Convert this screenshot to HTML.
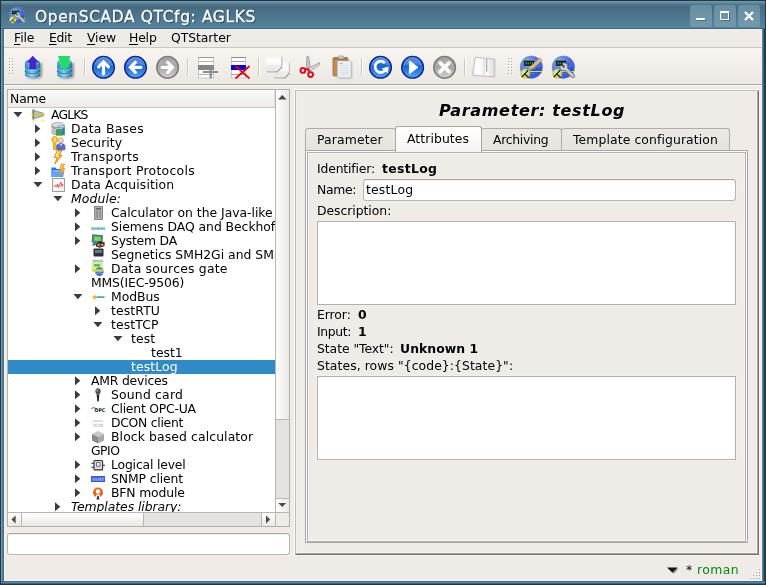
<!DOCTYPE html>
<html><head><meta charset="utf-8"><title>OpenSCADA QTCfg: AGLKS</title>
<style>
*{box-sizing:border-box;margin:0;padding:0}
html,body{width:766px;height:585px;overflow:hidden;background:#efebe7}
body{position:relative;font-family:"DejaVu Sans","Liberation Sans",sans-serif;font-size:12.4px;color:#000;line-height:14px}
.a{position:absolute}
.t u{text-decoration:underline;text-underline-offset:2px;text-decoration-thickness:1px}
.t{will-change:transform;position:absolute;white-space:nowrap;height:14px;line-height:14px;}
.b{font-weight:bold}
.i{font-style:italic}
svg{position:absolute;overflow:visible}
.sep{position:absolute;top:58px;width:2px;height:18px;border-left:1px solid #cdc9c4;border-right:1px solid #fff}
.tab{position:absolute;border:1px solid #b0ada9;border-bottom:1px solid #a9a6a3;border-radius:3px 3px 0 0;background:linear-gradient(#ece9e5,#e7e4e0)}
.ta{position:absolute;background:#fff;border:1px solid #b3b0ac;box-shadow:0 0 0 1px #f3f0ec}
.inp{position:absolute;background:#fff;border:1px solid #b7b4b0;border-top-color:#a9a6a2;border-radius:3px;box-shadow:0 0 0 1px #f3f0ec,inset 0 1px 0 #f0f0f0}
</style></head><body>

<div class="a" style="left:0;top:0;width:766px;height:585px;background:#213744"></div>
<div class="a" style="left:1px;top:1px;width:764px;height:583px;background:linear-gradient(90deg,#7399b0 0,#7399b0 1px,#557f98 1px,#557f98 2px,#40708a 2px,#40708a 761px,#5585a0 761px,#5585a0 762px,#3f637a 762px,#3f637a 763px,#263c4a 763px)"></div>
<div class="a" style="left:1px;top:581px;width:764px;height:3px;background:linear-gradient(#40708a 0,#40708a 1px,#5585a0 1px,#5585a0 2px,#3f637a 2px)"></div>
<div class="a" id="title" style="left:1px;top:1px;width:764px;height:28px;background:linear-gradient(#6d96ab 0px,#668ea3 1.5px,#4f758b 3.5px,#476b80 6px,#54849f 27px,#3f6a85 27px,#3f6a85 28px)"></div>
<svg style="left:9px;top:6.6px" width="16.4" height="16.4" viewBox="0 0 23 23"><use href="#qtcb"/><use href="#wr"/></svg>
<div id="title" class="t" style="left:35px;top:7px;letter-spacing:0.589px;height:20px;line-height:20px;font-size:15.5px;color:#fff;-webkit-text-stroke:0.3px #fff;text-shadow:1px 1px 1px #27414f">OpenSCADA QTCfg: AGLKS</div>
<div class="a" style="left:690px;top:5px;width:22px;height:22px;border-radius:3px;background:linear-gradient(#698ea2,#7399ad)"></div>
<div class="a" style="left:714px;top:5px;width:22px;height:22px;border-radius:3px;background:linear-gradient(#698ea2,#7399ad)"></div>
<div class="a" style="left:738px;top:5px;width:22px;height:22px;border-radius:3px;background:linear-gradient(#698ea2,#7399ad)"></div>
<div class="a" style="left:696px;top:18px;width:9px;height:2px;background:#fff;box-shadow:1px 1px 0 #4a6c80"></div>
<div class="a" style="left:720px;top:11px;width:9px;height:9px;border:1px solid #fff;border-top-width:2px;box-shadow:1px 1px 0 #4a6c80"></div>
<svg style="left:744px;top:11px" width="10" height="10" viewBox="0 0 10 10"><path d="M1 1 L9 9 M9 1 L1 9" stroke="#fff" stroke-width="2.2" fill="none"/></svg>
<div class="a" style="left:4px;top:29px;width:758px;height:552px;background:#efebe7;border:1px solid #f7f3ee;border-top:none"></div>
<div class="a" style="left:5px;top:29px;width:756px;height:18px;background:#efece7"></div>
<div id="menu0" class="t" style="left:13.6px;top:31px;letter-spacing:-0.085px;"><u>F</u>ile</div>
<div id="menu1" class="t" style="left:48.9px;top:31px;letter-spacing:-0.29px;"><u>E</u>dit</div>
<div id="menu2" class="t" style="left:86.9px;top:31px;letter-spacing:-0.109px;"><u>V</u>iew</div>
<div id="menu3" class="t" style="left:128.8px;top:31px;letter-spacing:-0.17px;"><u>H</u>elp</div>
<div id="menu4" class="t" style="left:170.8px;top:31px;letter-spacing:-0.063px;">QTStarter</div>
<div class="a" style="left:4px;top:47px;width:758px;height:1px;background:#c9c6c2"></div>
<div class="a" style="left:4px;top:48px;width:758px;height:36px;background:linear-gradient(#f8f5f1,#ebe8e4)"></div>
<div class="a" style="left:4px;top:84px;width:758px;height:1px;background:#aaa7a3"></div>
<div class="a" style="left:4px;top:85px;width:758px;height:1px;background:#fbfaf9"></div>
<div class="a" style="left:10px;top:59px;width:1px;height:1px;background:#fdfcfb"></div><div class="a" style="left:9px;top:58px;width:1px;height:1px;background:#a8a5a1"></div><div class="a" style="left:13px;top:59px;width:1px;height:1px;background:#fdfcfb"></div><div class="a" style="left:12px;top:58px;width:1px;height:1px;background:#a8a5a1"></div><div class="a" style="left:10px;top:62px;width:1px;height:1px;background:#fdfcfb"></div><div class="a" style="left:9px;top:61px;width:1px;height:1px;background:#a8a5a1"></div><div class="a" style="left:13px;top:62px;width:1px;height:1px;background:#fdfcfb"></div><div class="a" style="left:12px;top:61px;width:1px;height:1px;background:#a8a5a1"></div><div class="a" style="left:10px;top:65px;width:1px;height:1px;background:#fdfcfb"></div><div class="a" style="left:9px;top:64px;width:1px;height:1px;background:#a8a5a1"></div><div class="a" style="left:13px;top:65px;width:1px;height:1px;background:#fdfcfb"></div><div class="a" style="left:12px;top:64px;width:1px;height:1px;background:#a8a5a1"></div><div class="a" style="left:10px;top:68px;width:1px;height:1px;background:#fdfcfb"></div><div class="a" style="left:9px;top:67px;width:1px;height:1px;background:#a8a5a1"></div><div class="a" style="left:13px;top:68px;width:1px;height:1px;background:#fdfcfb"></div><div class="a" style="left:12px;top:67px;width:1px;height:1px;background:#a8a5a1"></div><div class="a" style="left:10px;top:71px;width:1px;height:1px;background:#fdfcfb"></div><div class="a" style="left:9px;top:70px;width:1px;height:1px;background:#a8a5a1"></div><div class="a" style="left:13px;top:71px;width:1px;height:1px;background:#fdfcfb"></div><div class="a" style="left:12px;top:70px;width:1px;height:1px;background:#a8a5a1"></div><div class="a" style="left:10px;top:74px;width:1px;height:1px;background:#fdfcfb"></div><div class="a" style="left:9px;top:73px;width:1px;height:1px;background:#a8a5a1"></div><div class="a" style="left:13px;top:74px;width:1px;height:1px;background:#fdfcfb"></div><div class="a" style="left:12px;top:73px;width:1px;height:1px;background:#a8a5a1"></div>
<div class="a" style="left:509px;top:59px;width:1px;height:1px;background:#fdfcfb"></div><div class="a" style="left:508px;top:58px;width:1px;height:1px;background:#a8a5a1"></div><div class="a" style="left:512px;top:59px;width:1px;height:1px;background:#fdfcfb"></div><div class="a" style="left:511px;top:58px;width:1px;height:1px;background:#a8a5a1"></div><div class="a" style="left:509px;top:62px;width:1px;height:1px;background:#fdfcfb"></div><div class="a" style="left:508px;top:61px;width:1px;height:1px;background:#a8a5a1"></div><div class="a" style="left:512px;top:62px;width:1px;height:1px;background:#fdfcfb"></div><div class="a" style="left:511px;top:61px;width:1px;height:1px;background:#a8a5a1"></div><div class="a" style="left:509px;top:65px;width:1px;height:1px;background:#fdfcfb"></div><div class="a" style="left:508px;top:64px;width:1px;height:1px;background:#a8a5a1"></div><div class="a" style="left:512px;top:65px;width:1px;height:1px;background:#fdfcfb"></div><div class="a" style="left:511px;top:64px;width:1px;height:1px;background:#a8a5a1"></div><div class="a" style="left:509px;top:68px;width:1px;height:1px;background:#fdfcfb"></div><div class="a" style="left:508px;top:67px;width:1px;height:1px;background:#a8a5a1"></div><div class="a" style="left:512px;top:68px;width:1px;height:1px;background:#fdfcfb"></div><div class="a" style="left:511px;top:67px;width:1px;height:1px;background:#a8a5a1"></div><div class="a" style="left:509px;top:71px;width:1px;height:1px;background:#fdfcfb"></div><div class="a" style="left:508px;top:70px;width:1px;height:1px;background:#a8a5a1"></div><div class="a" style="left:512px;top:71px;width:1px;height:1px;background:#fdfcfb"></div><div class="a" style="left:511px;top:70px;width:1px;height:1px;background:#a8a5a1"></div><div class="a" style="left:509px;top:74px;width:1px;height:1px;background:#fdfcfb"></div><div class="a" style="left:508px;top:73px;width:1px;height:1px;background:#a8a5a1"></div><div class="a" style="left:512px;top:74px;width:1px;height:1px;background:#fdfcfb"></div><div class="a" style="left:511px;top:73px;width:1px;height:1px;background:#a8a5a1"></div>
<div class="sep" style="left:84px"></div>
<div class="sep" style="left:187px"></div>
<div class="sep" style="left:258px"></div>
<div class="sep" style="left:361px"></div>
<div class="sep" style="left:464px"></div>
<svg style="left:0;top:0" width="766" height="90" viewBox="0 0 766 90">
<defs>
<linearGradient id="cyl" x1="0" x2="1" y1="0" y2="0"><stop offset="0" stop-color="#2a86c0"/><stop offset=".45" stop-color="#7fd0f2"/><stop offset="1" stop-color="#1f6fa6"/></linearGradient>
<linearGradient id="bl" x1="0" x2="0" y1="0" y2="1"><stop offset="0" stop-color="#2268d2"/><stop offset=".5" stop-color="#1c66d0"/><stop offset="1" stop-color="#55aaf4"/></linearGradient>
<linearGradient id="gr" x1="0" x2="0" y1="0" y2="1"><stop offset="0" stop-color="#8a8a8a"/><stop offset=".5" stop-color="#a8a8a8"/><stop offset="1" stop-color="#d0d0d0"/></linearGradient>
<linearGradient id="pg" x1="0" x2="0" y1="0" y2="1"><stop offset="0" stop-color="#f4f4f4"/><stop offset=".25" stop-color="#ffffff"/><stop offset=".55" stop-color="#f6f6f6"/><stop offset=".6" stop-color="#ececec"/><stop offset="1" stop-color="#e6e6e6"/></linearGradient>
<filter id="sh" x="-20%" y="-20%" width="150%" height="150%"><feGaussianBlur stdDeviation="0.8"/></filter>
<radialGradient id="qb" cx=".32" cy=".28" r=".8"><stop offset="0" stop-color="#8eaef0"/><stop offset=".55" stop-color="#4a70e2"/><stop offset="1" stop-color="#2f52d2"/></radialGradient>
<g id="qtcb">
<circle cx="11.5" cy="11.6" r="11.2" fill="url(#qb)" stroke="#6c84b4" stroke-width=".7"/>
<rect x="4" y="5.2" width="10.2" height="4.9" rx=".5" fill="#0a0a0a"/>
<path d="M5.3 6.3 h1.6 v2.6 h-1.6z M7.5 6.3 h1.6 v2.6 h-1.6z M10.2 6.3 h1.2 v2.6 h-1.2z M12 6.3 h1 v2.6 h-1z" fill="#19a51f"/>
<path d="M14.2 7.8 H16.6 V10.4" stroke="#3a4a78" stroke-width=".7" fill="none"/>
<path d="M12.5 16.6 L14 13.4 L15.2 17 L16.6 12 L18 17 L19.6 12.2 L20.8 16.4" stroke="#2840a8" stroke-width=".9" fill="none"/>
<path d="M8.6 15.9 H22.6" stroke="#e4ea38" stroke-width=".9"/>
<circle cx="5.4" cy="18" r="4.7" fill="#cdd874" stroke="#a8b058" stroke-width=".5"/>
<circle cx="4.7" cy="17.2" r="2.8" fill="#e0e898" opacity=".8"/>
<path d="M1.9 21.6 L8.3 14.6 M5 18.2 L8.8 22.2" stroke="#141414" stroke-width="1.2" fill="none"/>
</g>
<g id="wr">
<path d="M13.6 12.8 L21 20.4" stroke="#6e6e6e" stroke-width="4.4" stroke-linecap="round"/>
<path d="M12.0 8.5 A2.5 2.5 0 1 1 9.3 11.2" stroke="#767676" stroke-width="3" fill="none" stroke-linecap="round"/>
<path d="M13.6 12.8 L21 20.4" stroke="#c6c6c6" stroke-width="2.8" stroke-linecap="round"/>
<path d="M12.0 8.5 A2.5 2.5 0 1 1 9.3 11.2" stroke="#d8d8d8" stroke-width="1.8" fill="none" stroke-linecap="round"/>
</g>
<g id="bc"><circle r="10.8" fill="url(#bl)" stroke="#0b2490" stroke-width="1.5"/><circle r="9.6" fill="none" stroke="#5a8ee8" stroke-width=".7" opacity=".7"/><path d="M-9 -1.5 A9 9 0 0 1 9 -1.5 Q0 -5.5 -9 -1.5Z" fill="#fff" opacity=".22"/></g>
<g id="gc"><circle r="10.8" fill="url(#gr)" stroke="#7c7c7c" stroke-width="1.5"/><path d="M-9 -1.5 A9 9 0 0 1 9 -1.5 Q0 -5.5 -9 -1.5Z" fill="#fff" opacity=".18"/></g>
<linearGradient id="bk" x1="0" x2="1" y1="0" y2="0"><stop offset="0" stop-color="#f1efec"/><stop offset=".2" stop-color="#fefefd"/><stop offset=".5" stop-color="#f6f4f2"/><stop offset=".62" stop-color="#fbfaf9"/><stop offset="1" stop-color="#dddad7"/></linearGradient>
<filter id="sh2" x="-20%" y="-20%" width="150%" height="150%"><feGaussianBlur stdDeviation="0.5"/></filter>
</defs>
<!-- 1 db load (up arrow) -->
<g>
<path d="M27 63 V76 A7 2.6 0 0 0 42 76 V63Z" fill="#222" opacity=".45" filter="url(#sh)"/>
<path d="M25 62 V75 A7.5 2.8 0 0 0 40 75 V62Z" fill="url(#cyl)"/>
<ellipse cx="32.5" cy="62" rx="7.5" ry="2.8" fill="#5fb4e0"/>
<path d="M25 66.5 A7.5 2.8 0 0 0 40 66.5 M25 71 A7.5 2.8 0 0 0 40 71" stroke="#1b6a9e" stroke-width=".9" fill="none" opacity=".9"/><path d="M25 67.5 A7.5 2.8 0 0 0 40 67.5 M25 72 A7.5 2.8 0 0 0 40 72" stroke="#a8e0f8" stroke-width=".8" fill="none" opacity=".7"/>
<path d="M32.8 55.8 L39 62.5 L36 62.5 L36.4 69 L29.2 69 L29.6 62.5 L26.6 62.5Z" fill="#4a22d0"/>
</g>
<!-- 2 db save (down arrow) -->
<g>
<path d="M59 63 V76 A7 2.6 0 0 0 74 76 V63Z" fill="#222" opacity=".45" filter="url(#sh)"/>
<path d="M57.3 62 V75 A7.3 2.8 0 0 0 71.9 75 V62Z" fill="url(#cyl)"/>
<ellipse cx="64.6" cy="62" rx="7.3" ry="2.8" fill="#5fb4e0"/>
<path d="M57.3 66.5 A7.3 2.8 0 0 0 71.9 66.5 M57.3 71 A7.3 2.8 0 0 0 71.9 71" stroke="#1b6a9e" stroke-width=".9" fill="none" opacity=".9"/><path d="M57.3 67.5 A7.3 2.8 0 0 0 71.9 67.5 M57.3 72 A7.3 2.8 0 0 0 71.9 72" stroke="#a8e0f8" stroke-width=".8" fill="none" opacity=".7"/>
<path d="M57.8 56 L70.4 56 L68.4 62.5 L70.6 62.5 L64.6 71.3 L58.6 62.5 L60.4 62.5Z" fill="#22dc68"/>
</g>
<!-- 3,4 nav up / back -->
<use href="#bc" x="103.5" y="67.3"/>
<path d="M103.5 62 L103.5 73.8 M98.6 66.9 L103.5 62 L108.4 66.9" stroke="#fff" stroke-width="3.2" fill="none" stroke-linecap="round" stroke-linejoin="miter"/>
<use href="#bc" x="135.5" y="67.3"/>
<path d="M130.4 67.3 L141 67.3 M135.4 62.3 L130.4 67.3 L135.4 72.3" stroke="#fff" stroke-width="3.2" fill="none" stroke-linecap="round" stroke-linejoin="miter"/>
<!-- 5 forward disabled -->
<use href="#gc" x="167.6" y="67.3"/>
<path d="M162 67.3 L172.6 67.3 M167.6 62.3 L172.6 67.3 L167.6 72.3" stroke="#fafafa" stroke-width="3.2" fill="none" stroke-linecap="round" stroke-linejoin="miter"/>
<!-- 6 add item -->
<g>
<rect x="198.5" y="57.5" width="15" height="20.5" fill="#fdfdfd" stroke="#c9c9c9" stroke-width="1"/>
<path d="M198 57.5 H214" stroke="#9a9a9a" stroke-width="1"/><path d="M198 61.5 H214 M198 74.5 H214" stroke="#b4b4b4" stroke-width="1"/>
<rect x="198" y="65" width="16" height="5" fill="#858585"/>
<path d="M203 72 H218 M210.7 66 V78.5" stroke="#8c8c8c" stroke-width="2.2"/>
</g>
<!-- 7 del item -->
<g>
<rect x="231.5" y="57.5" width="14" height="20.5" fill="#fdfdfd" stroke="#c9c9c9" stroke-width="1"/>
<path d="M231 57.5 H246" stroke="#8c8c8c" stroke-width="1"/><path d="M231 61.5 H246 M231 74.5 H246" stroke="#a4a4a4" stroke-width="1"/>
<rect x="231" y="65" width="15" height="5" fill="#0000e0"/>
<path d="M235.5 66 L249.5 78.5 M249.5 66 L235.5 78.5" stroke="#e00010" stroke-width="1.7"/>
</g>
<!-- 8 copy (disabled) -->
<g>
<path d="M274.6 63.3 H290.0 V73.8 L285.3 78.6 H274.6Z" fill="#9a9a9a" opacity=".55" filter="url(#sh2)"/>
<path d="M274 62.5 H289.3 V73.1 L284.6 77.8 H274Z" fill="url(#pg)"/>
<path d="M289.3 62.5 V73.1 M274 77.8 H284.6" stroke="#b9b9b9" stroke-width=".8" fill="none"/>
<path d="M284.6 77.8 L284.90000000000003 73.39999999999999 L289.3 73.1Z" fill="#f4f4f4"/>
<path d="M284.6 77.8 L289.3 73.1" stroke="#777" stroke-width=".9"/>
<path d="M267.0 57.199999999999996 H282.4 V67.7 L277.7 72.5 H267.0Z" fill="#9a9a9a" opacity=".55" filter="url(#sh2)"/>
<path d="M266.4 56.4 H281.7 V67.0 L277.0 71.7 H266.4Z" fill="url(#pg)"/>
<path d="M281.7 56.4 V67.0 M266.4 71.7 H277.0" stroke="#b9b9b9" stroke-width=".8" fill="none"/>
<path d="M277.0 71.7 L277.3 67.3 L281.7 67.0Z" fill="#f4f4f4"/>
<path d="M277.0 71.7 L281.7 67.0" stroke="#777" stroke-width=".9"/>
</g>
<!-- 9 cut -->
<g>
<path d="M307 56.2 L308.8 57 L310.4 68.4 L306.2 69.6Z" fill="#c2c6ca" stroke="#7e8286" stroke-width=".6" stroke-linejoin="round"/>
<path d="M319.8 62.6 L319 65.2 L309.8 71.6 L307.4 68.4Z" fill="#d4d8dc" stroke="#7e8286" stroke-width=".6" stroke-linejoin="round"/>
<circle cx="302.9" cy="70.4" r="2.4" fill="none" stroke="#d01426" stroke-width="2"/>
<circle cx="310.6" cy="74.6" r="2.4" fill="none" stroke="#d01426" stroke-width="2"/>
<path d="M305 69.6 L308.4 69.4 L309.6 72.4" stroke="#d01426" stroke-width="2" fill="none"/>
<path d="M302.2 69.2 A1.6 1.6 0 0 1 304 69.4" stroke="#f06070" stroke-width=".7" fill="none"/>
</g>
<!-- 10 paste -->
<g>
<rect x="333" y="57.5" width="15" height="18.5" rx="1.2" fill="#c48c50" stroke="#96683a" stroke-width=".8"/>
<rect x="334" y="58.4" width="13" height="1.6" fill="#8a6a48" opacity=".6"/>
<rect x="338.4" y="55.9" width="5.2" height="2.8" rx=".8" fill="#cfcfcf" stroke="#8e8e8e" stroke-width=".6"/>
<rect x="338.4" y="62" width="13.4" height="16.2" fill="#444" opacity=".4" filter="url(#sh)"/>
<path d="M337.4 61 H351 V77.6 H337.4Z" fill="#edf1f5" stroke="#b9c0c8" stroke-width=".6"/>
<path d="M339.5 63.5 H342.5" stroke="#8ab0d8" stroke-width=".9"/>
<path d="M339.5 66 H348.8 M339.5 68.2 H348.8 M339.5 70.4 H348.8 M339.5 72.6 H348.8 M339.5 74.8 H348.8" stroke="#ccd6e0" stroke-width=".7"/>
</g>
<!-- 11 refresh, 12 start, 13 stop -->
<use href="#bc" x="380.5" y="67.3"/>
<path d="M384.8 63 A5.6 5.6 0 1 0 386 68.6" stroke="#fff" stroke-width="2.8" fill="none"/>
<path d="M381.8 68.4 L388.6 66.6 L387.8 73.2Z" fill="#fff"/>
<use href="#bc" x="412.6" y="67.3"/>
<path d="M409.4 60.8 L418 67.3 L409.4 73.8Z" fill="#fff" stroke="#fff" stroke-width=".8" stroke-linejoin="round"/>
<use href="#gc" x="444.6" y="67.3"/>
<path d="M440.2 62.9 L449 71.7 M449 62.9 L440.2 71.7" stroke="#fafafa" stroke-width="3.8" fill="none" stroke-linecap="round"/>
<!-- 14 manual (disabled book) -->
<g>
<path d="M475.2 57.3 L494.8 59.3 L494.6 77 L472.6 75.4Z" fill="#d0cdc9" opacity=".7" filter="url(#sh)"/>
<path d="M475.2 57.3 L494.8 59.3 L494.6 76.8 L472.6 75.2Z" fill="url(#bk)" stroke="#bdbab6" stroke-width=".9" stroke-linejoin="round"/>
<path d="M484 58.4 L484 76" stroke="#e2dfdb" stroke-width="1.4"/>
<path d="M486.6 59 L486.6 71.6" stroke="#aeaba8" stroke-width="1.3"/>
</g>
<!-- 15 / 16 -->
<use href="#qtcb" x="519.9" y="55.6"/>
<path d="M541.2 59 L531.4 67.8" stroke="#b89468" stroke-width="3.8" stroke-linecap="butt"/>
<path d="M541.4 58.8 L531.4 67.6" stroke="#dcb88c" stroke-width="2.6" stroke-linecap="butt"/>
<path d="M532.8 66.2 L529.2 69.4 L530 67Z" fill="#e6e070" stroke="#cfc858" stroke-width="1.2"/>
<use href="#qtcb" x="551.9" y="55.6"/>
<use href="#wr" x="551.9" y="55.6"/>
</svg>

<div class="a" id="tree" style="left:7px;top:89px;width:283px;height:438px;border:1px solid #b3b0ac;background:#fff"></div>
<div class="a" style="left:8px;top:90px;width:267px;height:18px;background:linear-gradient(#fbfaf9,#efece8);border-bottom:1px solid #c9c6c2;border-right:1px solid #e0ddd9"></div>
<div id="hdr" class="t" style="left:9.6px;top:92px;letter-spacing:-0.13px;">Name</div>
<div class="a" style="left:8px;top:107px;width:267px;height:405px;overflow:hidden">
<svg style="left:5px;top:5px" width="10" height="6" viewBox="0 0 10 6"><path d="M0.4 0 L9.4 0 L4.9 5.2Z" fill="#3c3c3c"/></svg>
<svg style="left:23px;top:1px" width="14" height="14" viewBox="0 0 14 14"><path d="M2 1.4 L12.6 4.8 L12.6 8.6 L2 11.4Z" fill="#a4a4a4"/><path d="M2 1.4 L2 11.4" stroke="#5a5a5a" stroke-width="1.1"/><path d="M3.4 3.4 L11.6 5.8 L11.6 7.8 L3.4 9.6Z" fill="#c2c2c2"/><path d="M0.6 6.8 H14" stroke="#d2c232" stroke-width="2.6" stroke-dasharray="2.1 .6" opacity=".85"/><path d="M1 12.8 H3.6 V11 M10.4 11 V12.8 H13.4" stroke="#ecec50" stroke-width=".9" fill="none"/></svg>
<div id="row0" class="t" style="left:42.8px;top:1px;letter-spacing:-0.825px;color:#000">AGLKS</div>
<svg style="left:27px;top:17px" width="6" height="10" viewBox="0 0 6 10"><path d="M0 0.3 L5.3 4.8 L0 9.3Z" fill="#3c3c3c"/></svg>
<svg style="left:43px;top:15px" width="14" height="14" viewBox="0 0 14 14"><path d="M0.4 3 V10.6 A6.4 2.6 0 0 0 13.2 10.6 V3" fill="#a8a8a8"/><ellipse cx="6.8" cy="3" rx="6.4" ry="2.6" fill="#dcdcdc" stroke="#8c8c8c" stroke-width=".6"/><path d="M0.4 5.8 A6.4 2.6 0 0 0 13.2 5.8 M0.4 8.4 A6.4 2.6 0 0 0 13.2 8.4" stroke="#eaeaea" stroke-width=".9" fill="none"/><rect x="7.4" y="3.6" width="6.4" height="9.6" fill="#2a7ab8"/><rect x="7.8" y="4" width="5.6" height="1.6" fill="#b8dcf0"/><rect x="5" y="6" width="6.6" height="7.6" fill="#3ca83c"/><rect x="5.4" y="7.4" width="5" height="2" fill="#5a78e0"/><rect x="5" y="6" width="6.6" height="1.2" fill="#9ad89a"/></svg>
<div id="row1" class="t" style="left:62.8px;top:15px;letter-spacing:0.285px;color:#000">Data Bases</div>
<svg style="left:27px;top:31px" width="6" height="10" viewBox="0 0 6 10"><path d="M0 0.3 L5.3 4.8 L0 9.3Z" fill="#3c3c3c"/></svg>
<svg style="left:43px;top:29px" width="14" height="14" viewBox="0 0 14 14"><path d="M1 2.2 L2.4 0.8 H5.2 L6.4 2.2 V5.4 L5 6.6 V13.4 L3.6 14 L2.4 13.2 V6.6 L1 5.4Z" fill="#f8c428" stroke="#e08010" stroke-width=".7"/><path d="M3 2 H4.6 V5.2 H3Z" fill="#fff2b0"/><circle cx="9.8" cy="4.4" r="2.7" fill="#f4d4b0" stroke="#b88860" stroke-width=".5"/><path d="M5.6 13.8 V10.4 Q5.6 7.6 9.8 7.6 Q14 7.6 14 10.4 V13.8 Q9.8 14.6 5.6 13.8Z" fill="#3a78e4" stroke="#2450b0" stroke-width=".5"/><path d="M8.6 8 H11 L9.8 13.6Z" fill="#f4f4ff"/><path d="M9.4 8.4 H10.2 L10.5 12 L9.8 13.2 L9.1 12Z" fill="#d42020"/></svg>
<div id="row2" class="t" style="left:62.8px;top:29px;letter-spacing:0.011px;color:#000">Security</div>
<svg style="left:27px;top:45px" width="6" height="10" viewBox="0 0 6 10"><path d="M0 0.3 L5.3 4.8 L0 9.3Z" fill="#3c3c3c"/></svg>
<svg style="left:43px;top:43px" width="14" height="14" viewBox="0 0 14 14"><path d="M6.2 0.6 L3.2 7.6 L6.4 7 L4 13.8 L11 5.2 L7.8 5.8 L10.8 0.6Z" fill="#fcd84a" stroke="#ec8010" stroke-width="1" stroke-linejoin="round"/><path d="M7 1.6 L5 6.4 L7.6 5.9" stroke="#fff6c0" stroke-width=".8" fill="none"/></svg>
<div id="row3" class="t" style="left:62.8px;top:43px;letter-spacing:0.347px;color:#000">Transports</div>
<svg style="left:27px;top:59px" width="6" height="10" viewBox="0 0 6 10"><path d="M0 0.3 L5.3 4.8 L0 9.3Z" fill="#3c3c3c"/></svg>
<svg style="left:43px;top:57px" width="14" height="14" viewBox="0 0 14 14"><path d="M0.4 3.6 H4.6 L5.6 5 H12 V12.8 H0.4Z" fill="#2f72dc"/><path d="M0.4 12.8 L1.6 6.2 H13.6 L12.2 12.8Z" fill="#5fa6f6"/><path d="M1.8 7 H13" stroke="#a8d0ff" stroke-width=".8"/><path d="M10.6 0.2 L8.4 6 L10.4 5.6 L8.8 11.6 L13.8 4.2 L11.6 4.6 L13.6 0.2Z" fill="#fccc38" stroke="#ec8010" stroke-width=".8" stroke-linejoin="round"/></svg>
<div id="row4" class="t" style="left:62.8px;top:57px;letter-spacing:0.285px;color:#000">Transport Protocols</div>
<svg style="left:25px;top:75px" width="10" height="6" viewBox="0 0 10 6"><path d="M0.4 0 L9.4 0 L4.9 5.2Z" fill="#3c3c3c"/></svg>
<svg style="left:43px;top:71px" width="14" height="14" viewBox="0 0 14 14"><rect x="1.5" y="0.5" width="12" height="13" fill="#efefef" stroke="#a0a0a0" stroke-width="1"/><rect x="2.5" y="1.5" width="10" height="11" fill="#f8f8f8"/><path d="M3 8.6 L4.4 7.4 L5.4 9 L6.6 6 L7.6 9.6 L8.8 6.8 L9.8 4.2 L11 8.4 L12 6" stroke="#e23a3a" stroke-width=".9" fill="none" stroke-linejoin="round"/></svg>
<div id="row5" class="t" style="left:62.8px;top:71px;letter-spacing:0.109px;color:#000">Data Acquisition</div>
<svg style="left:45px;top:89px" width="10" height="6" viewBox="0 0 10 6"><path d="M0.4 0 L9.4 0 L4.9 5.2Z" fill="#3c3c3c"/></svg>
<div id="row6" class="t i" style="left:62.8px;top:85px;letter-spacing:0.103px;color:#000">Module:</div>
<svg style="left:67px;top:101px" width="6" height="10" viewBox="0 0 6 10"><path d="M0 0.3 L5.3 4.8 L0 9.3Z" fill="#3c3c3c"/></svg>
<svg style="left:83px;top:99px" width="14" height="14" viewBox="0 0 14 14"><rect x="3.5" y="0.5" width="8" height="13" fill="#b0b0b0" stroke="#777" stroke-width=".8"/><rect x="5" y="2" width="5" height="1.5" fill="#666"/><path d="M6 4.5 V12 M9 4.5 V12" stroke="#7a7a7a" stroke-width="1"/></svg>
<div id="row7" class="t" style="left:102.8px;top:99px;letter-spacing:-0.027px;color:#000">Calculator on the Java-like</div>
<svg style="left:67px;top:115px" width="6" height="10" viewBox="0 0 6 10"><path d="M0 0.3 L5.3 4.8 L0 9.3Z" fill="#3c3c3c"/></svg>
<svg style="left:83px;top:113px" width="14" height="14" viewBox="0 0 14 14"><text x="0" y="10" font-size="3.8" font-weight="bold" fill="#0a9a9a" font-family="DejaVu Sans, sans-serif" textLength="14" lengthAdjust="spacingAndGlyphs">SIEMENS</text></svg>
<div id="row8" class="t" style="left:102.8px;top:113px;letter-spacing:-0.05px;color:#000">Siemens DAQ and Beckhoff</div>
<svg style="left:67px;top:129px" width="6" height="10" viewBox="0 0 6 10"><path d="M0 0.3 L5.3 4.8 L0 9.3Z" fill="#3c3c3c"/></svg>
<svg style="left:83px;top:127px" width="14" height="14" viewBox="0 0 14 14"><path d="M1.6 0.8 L11.4 1.6 L11 9 L1.2 8.2Z" fill="#3ca83c" stroke="#6a48a8" stroke-width=".9"/><path d="M3.4 2.6 L9.8 3.2 L9.6 7 L3.2 6.4Z" fill="#7ad870"/><path d="M5 9.4 L8.6 7 L13.8 8.6 L13.4 12.2 L8.6 13.8 L5 12.4Z" fill="#28303c"/><circle cx="7.6" cy="11" r="1.4" fill="#e88a28"/><circle cx="11.2" cy="10.8" r="1.4" fill="#e88a28"/><path d="M1 10.2 L4.6 8.6 L6 10 L2.4 12Z" fill="#3a6a9a"/></svg>
<div id="row9" class="t" style="left:102.8px;top:127px;letter-spacing:-0.228px;color:#000">System DA</div>
<svg style="left:83px;top:141px" width="14" height="14" viewBox="0 0 14 14"><rect x="2.5" y="0.5" width="10" height="8" rx="1" fill="#2c3038"/><rect x="4" y="2" width="7" height="3" fill="#6a7888"/><text x="1.5" y="13.5" font-size="3" fill="#333" font-family="DejaVu Sans, sans-serif" textLength="11" lengthAdjust="spacingAndGlyphs">SMH2Gi</text></svg>
<div id="row10" class="t" style="left:102.8px;top:141px;letter-spacing:0.0px;color:#000">Segnetics SMH2Gi and SM</div>
<svg style="left:67px;top:157px" width="6" height="10" viewBox="0 0 6 10"><path d="M0 0.3 L5.3 4.8 L0 9.3Z" fill="#3c3c3c"/></svg>
<svg style="left:83px;top:155px" width="14" height="14" viewBox="0 0 14 14"><rect x="1.6" y="0.8" width="9.6" height="8" fill="#d8f0a0" stroke="#b8d868" stroke-width=".5"/><rect x="3" y="2" width="6" height="2.6" fill="#58c848"/><circle cx="8.4" cy="9.6" r="4.3" fill="#3a70d8"/><path d="M0.8 7.2 H12.6 V9.8 H0.8Z" fill="#d8e038" opacity=".9"/><path d="M5 12 Q8.4 10 12 11.6" stroke="#8ab0f0" stroke-width=".8" fill="none"/></svg>
<div id="row11" class="t" style="left:102.8px;top:155px;letter-spacing:0.214px;color:#000">Data sources gate</div>
<div id="row12" class="t" style="left:82.8px;top:169px;letter-spacing:-0.15px;color:#000">MMS(IEC-9506)</div>
<svg style="left:65px;top:187px" width="10" height="6" viewBox="0 0 10 6"><path d="M0.4 0 L9.4 0 L4.9 5.2Z" fill="#3c3c3c"/></svg>
<svg style="left:83px;top:183px" width="14" height="14" viewBox="0 0 14 14"><path d="M3.5 4.5 L4.3 6.2 L6 6.5 L4.6 7.6 L5 9.5 L3.5 8.5 L2 9.5 L2.4 7.6 L1 6.5 L2.7 6.2Z" fill="#f0a818"/><rect x="5.5" y="6.3" width="8" height="1.6" fill="#38a0b0"/></svg>
<div id="row13" class="t" style="left:102.8px;top:183px;letter-spacing:-0.024px;color:#000">ModBus</div>
<svg style="left:87px;top:199px" width="6" height="10" viewBox="0 0 6 10"><path d="M0 0.3 L5.3 4.8 L0 9.3Z" fill="#3c3c3c"/></svg>
<div id="row14" class="t" style="left:102.8px;top:197px;letter-spacing:0.128px;color:#000">testRTU</div>
<svg style="left:85px;top:215px" width="10" height="6" viewBox="0 0 10 6"><path d="M0.4 0 L9.4 0 L4.9 5.2Z" fill="#3c3c3c"/></svg>
<div id="row15" class="t" style="left:102.8px;top:211px;letter-spacing:0.137px;color:#000">testTCP</div>
<svg style="left:105px;top:229px" width="10" height="6" viewBox="0 0 10 6"><path d="M0.4 0 L9.4 0 L4.9 5.2Z" fill="#3c3c3c"/></svg>
<div id="row16" class="t" style="left:122.8px;top:225px;letter-spacing:0.112px;color:#000">test</div>
<div id="row17" class="t" style="left:142.8px;top:239px;letter-spacing:0.018px;color:#000">test1</div>
<div class="a" style="left:0;top:253px;width:267px;height:14px;background:#308ac6"></div>
<div id="row18" class="t" style="left:122.8px;top:253px;letter-spacing:0.098px;color:#fff">testLog</div>
<svg style="left:67px;top:269px" width="6" height="10" viewBox="0 0 6 10"><path d="M0 0.3 L5.3 4.8 L0 9.3Z" fill="#3c3c3c"/></svg>
<div id="row19" class="t" style="left:82.8px;top:267px;letter-spacing:-0.197px;color:#000">AMR devices</div>
<svg style="left:67px;top:283px" width="6" height="10" viewBox="0 0 6 10"><path d="M0 0.3 L5.3 4.8 L0 9.3Z" fill="#3c3c3c"/></svg>
<svg style="left:83px;top:281px" width="14" height="14" viewBox="0 0 14 14"><ellipse cx="7" cy="3.2" rx="2.6" ry="3" fill="#4a4a4a"/><ellipse cx="6.4" cy="2.4" rx="1.2" ry="1.4" fill="#8a8a8a"/><path d="M5.6 5.6 H8.4 L7.7 13.6 H6.3Z" fill="#1e1e1e"/><rect x="5.2" y="5.6" width="3.6" height="1" fill="#9a9a9a"/></svg>
<div id="row20" class="t" style="left:102.8px;top:281px;letter-spacing:0.191px;color:#000">Sound card</div>
<svg style="left:67px;top:297px" width="6" height="10" viewBox="0 0 6 10"><path d="M0 0.3 L5.3 4.8 L0 9.3Z" fill="#3c3c3c"/></svg>
<svg style="left:83px;top:295px" width="14" height="14" viewBox="0 0 14 14"><path d="M0.4 6.6 Q3 4.6 6 7.4" stroke="#4a6ac8" stroke-width="1.1" fill="none"/><text x="3.6" y="9.6" font-size="5" font-weight="bold" fill="#111" font-family="DejaVu Sans, sans-serif" textLength="10.4" lengthAdjust="spacingAndGlyphs">OPC</text></svg>
<div id="row21" class="t" style="left:102.8px;top:295px;letter-spacing:-0.223px;color:#000">Client OPC-UA</div>
<svg style="left:67px;top:311px" width="6" height="10" viewBox="0 0 6 10"><path d="M0 0.3 L5.3 4.8 L0 9.3Z" fill="#3c3c3c"/></svg>
<svg style="left:83px;top:309px" width="14" height="14" viewBox="0 0 14 14"><text x="2" y="6" font-size="2.6" fill="#999" font-family="DejaVu Sans, sans-serif" textLength="10" lengthAdjust="spacingAndGlyphs">ADVANTECH</text><text x="2" y="10.5" font-size="4.4" fill="#999" font-family="DejaVu Sans, sans-serif" textLength="10" lengthAdjust="spacingAndGlyphs">DCON</text></svg>
<div id="row22" class="t" style="left:102.8px;top:309px;letter-spacing:-0.285px;color:#000">DCON client</div>
<svg style="left:67px;top:325px" width="6" height="10" viewBox="0 0 6 10"><path d="M0 0.3 L5.3 4.8 L0 9.3Z" fill="#3c3c3c"/></svg>
<svg style="left:83px;top:323px" width="14" height="14" viewBox="0 0 14 14"><path d="M1 4 L7 1 L13 4 L7 7Z" fill="#c8c8c8"/><path d="M1 4 L7 7 V13.5 L1 10.5Z" fill="#8a8a8a"/><path d="M13 4 L7 7 V13.5 L13 10.5Z" fill="#a8a8a8"/></svg>
<div id="row23" class="t" style="left:102.8px;top:323px;letter-spacing:0.107px;color:#000">Block based calculator</div>
<div id="row24" class="t" style="left:82.8px;top:337px;letter-spacing:-0.506px;color:#000">GPIO</div>
<svg style="left:67px;top:353px" width="6" height="10" viewBox="0 0 6 10"><path d="M0 0.3 L5.3 4.8 L0 9.3Z" fill="#3c3c3c"/></svg>
<svg style="left:83px;top:351px" width="14" height="14" viewBox="0 0 14 14"><rect x="3" y="2.5" width="8.6" height="9.4" rx="1" fill="#dcdcdc" stroke="#2e2e2e" stroke-width="1.1"/><path d="M0.4 5.2 H3 M0.4 9.2 H3 M11.6 7.2 H14" stroke="#2e2e2e" stroke-width="1.1"/><rect x="5.6" y="4.6" width="3.4" height="3.6" fill="#f4f4f4" stroke="#555" stroke-width=".8"/></svg>
<div id="row25" class="t" style="left:102.8px;top:351px;letter-spacing:-0.173px;color:#000">Logical level</div>
<svg style="left:67px;top:367px" width="6" height="10" viewBox="0 0 6 10"><path d="M0 0.3 L5.3 4.8 L0 9.3Z" fill="#3c3c3c"/></svg>
<svg style="left:83px;top:365px" width="14" height="14" viewBox="0 0 14 14"><rect x="0" y="4" width="14" height="6" fill="#3858d8"/><text x="1" y="9" font-size="4.6" font-weight="bold" fill="#b8c8ff" font-family="DejaVu Serif, serif" textLength="12" lengthAdjust="spacingAndGlyphs">SNMP</text></svg>
<div id="row26" class="t" style="left:102.8px;top:365px;letter-spacing:-0.109px;color:#000">SNMP client</div>
<svg style="left:67px;top:381px" width="6" height="10" viewBox="0 0 6 10"><path d="M0 0.3 L5.3 4.8 L0 9.3Z" fill="#3c3c3c"/></svg>
<svg style="left:83px;top:379px" width="14" height="14" viewBox="0 0 14 14"><circle cx="7" cy="6.5" r="5" fill="#e86818"/><circle cx="7" cy="5.5" r="2.2" fill="#fff"/><path d="M4.5 13.5 L5.5 8.5 H8.5 L9.5 13.5Z" fill="#fff"/><path d="M5.5 13.5 L6.3 10 H7.7 L8.5 13.5Z" fill="#333"/></svg>
<div id="row27" class="t" style="left:102.8px;top:379px;letter-spacing:-0.158px;color:#000">BFN module</div>
<svg style="left:47px;top:395px" width="6" height="10" viewBox="0 0 6 10"><path d="M0 0.3 L5.3 4.8 L0 9.3Z" fill="#3c3c3c"/></svg>
<div id="row28" class="t i" style="left:62.8px;top:393px;letter-spacing:-0.06px;color:#000">Templates library:</div>
</div>
<div class="a" style="left:275px;top:90px;width:14px;height:422px;background:#e5e3df;border-left:1px solid #b8b5b2"></div>
<div class="a" style="left:276px;top:90px;width:13px;height:14px;background:linear-gradient(90deg,#fefefe,#ebe8e4);border-bottom:1px solid #b8b5b2"></div>
<svg style="left:278px;top:95px" width="9" height="5" viewBox="0 0 9 5"><path d="M0 4.5 L8.6 4.5 L4.3 0Z" fill="#484848"/></svg>
<div class="a" style="left:276px;top:103px;width:13px;height:317px;background:linear-gradient(90deg,#fefefe,#ebe8e4);border-bottom:1px solid #b8b5b2"></div>
<div class="a" style="left:276px;top:498px;width:13px;height:14px;background:linear-gradient(90deg,#fefefe,#ebe8e4);border-top:1px solid #b8b5b2"></div>
<svg style="left:278px;top:503px" width="9" height="5" viewBox="0 0 9 5"><path d="M0.2 0 L8.2 0 L4.2 4Z" fill="#4c4c4c"/></svg>
<div class="a" style="left:8px;top:512px;width:281px;height:14px;background:#e5e3df;border-top:1px solid #b8b5b2"></div>
<div class="a" style="left:8px;top:513px;width:14px;height:13px;background:linear-gradient(#fefefe,#ebe8e4);border-right:1px solid #b8b5b2"></div>
<svg style="left:11.3px;top:514.6px" width="5" height="9" viewBox="0 0 5 9"><path d="M4.6 0.4 L4.6 8.4 L0.4 4.4Z" fill="#4c4c4c"/></svg>
<div class="a" style="left:22px;top:513px;width:122px;height:13px;background:linear-gradient(#fefefe,#ebe8e4);border-right:1px solid #b8b5b2"></div>
<div class="a" style="left:261px;top:513px;width:14px;height:13px;background:linear-gradient(#fefefe,#ebe8e4);border-left:1px solid #b8b5b2"></div>
<svg style="left:266px;top:515px" width="5" height="9" viewBox="0 0 5 9"><path d="M0 0.4 L0 8.4 L4.2 4.4Z" fill="#4c4c4c"/></svg>
<div class="a" style="left:275px;top:512px;width:14px;height:14px;background:#efebe7;border-left:1px solid #b8b5b2;border-top:1px solid #b8b5b2"></div>
<div class="inp" style="left:7px;top:533px;width:283px;height:22px"></div>
<div class="a" style="left:294px;top:89px;width:466px;height:467px;border:1px solid #fff;border-right-color:#f7f4f0;border-bottom-color:#f7f4f0"></div>
<div class="a" style="left:295px;top:90px;width:464px;height:465px;border:1px solid #bfbcb8;border-right-color:#757371;border-bottom-color:#757371"></div>
<div class="a" style="left:296px;top:91px;width:462px;height:463px;border:1px solid #f3f0ec;border-right-color:#a5a29e;border-bottom-color:#a5a29e"></div>
<div class="a" style="left:297px;top:92px;width:460px;height:461px;border:1px solid transparent;border-right-color:#f7f4f0;border-bottom-color:#f7f4f0"></div>
<div id="ptitle" class="t b i" style="left:438.8px;top:101px;letter-spacing:0.653px;height:20px;line-height:20px;font-size:16px">Parameter: testLog</div>
<div class="a" style="left:305px;top:150px;width:443px;height:393px;border:1px solid #a9a6a3"></div>
<div class="a" style="left:306px;top:151px;width:441px;height:391px;border:1px solid #fff;border-bottom:none"></div>
<div class="a" style="left:307px;top:152px;width:439px;height:390px;border:1px solid #b5b2ae"></div>
<div class="a" style="left:308px;top:153px;width:437px;height:388px;border:1px solid #f5f3f0"></div>
<div class="tab" style="left:305px;top:128px;width:91px;height:23px"></div>
<div class="tab" style="left:481px;top:128px;width:81px;height:23px"></div>
<div class="tab" style="left:561px;top:128px;width:169px;height:23px"></div>
<div class="tab" style="left:395px;top:126px;width:87px;height:26px;background:linear-gradient(#fff,#f7f4f1);border-color:#a9a6a3;border-bottom:none"></div>
<div id="tab0" class="t" style="left:316.8px;top:133px;letter-spacing:0.14px;">Parameter</div>
<div id="tab1" class="t" style="left:407px;top:132px;letter-spacing:0.088px;">Attributes</div>
<div id="tab2" class="t" style="left:493px;top:133px;letter-spacing:-0.274px;">Archiving</div>
<div id="tab3" class="t" style="left:573px;top:133px;letter-spacing:0.104px;">Template configuration</div>
<div id="f_id" class="t" style="left:316.8px;top:162px;letter-spacing:-0.16px;">Identifier:</div>
<div id="f_idv" class="t b" style="left:381.8px;top:162px;letter-spacing:0.33px;">testLog</div>
<div id="f_nm" class="t" style="left:316.8px;top:183px;letter-spacing:-0.3px;">Name:</div>
<div class="inp" style="left:363px;top:179px;width:373px;height:22px"></div>
<div id="f_nmv" class="t" style="left:365.6px;top:183px;letter-spacing:0.19px;">testLog</div>
<div id="f_ds" class="t" style="left:316.8px;top:204px;letter-spacing:-0.04px;">Description:</div>
<div class="ta" style="left:317px;top:221px;width:419px;height:84px"></div>
<div id="f_er" class="t" style="left:316.8px;top:308px;letter-spacing:-0.07px;">Error:</div>
<div id="f_erv" class="t b" style="left:358px;top:308px;letter-spacing:0px;">0</div>
<div id="f_in" class="t" style="left:316.8px;top:325px;letter-spacing:-0.39px;">Input:</div>
<div id="f_inv" class="t b" style="left:358px;top:325px;letter-spacing:0px;">1</div>
<div id="f_st" class="t" style="left:316.8px;top:342px;letter-spacing:-0.06px;">State "Text":</div>
<div id="f_stv" class="t b" style="left:400.3px;top:342px;letter-spacing:0.07px;">Unknown 1</div>
<div id="f_ss" class="t" style="left:316.8px;top:359px;letter-spacing:0.07px;">States, rows "{code}:{State}":</div>
<div class="ta" style="left:317px;top:376px;width:419px;height:84px"></div>
<svg style="left:667px;top:567px" width="12" height="7" viewBox="0 0 12 7"><path d="M1.5 1.5 L11.5 1.5 L6.5 6.8Z" fill="#8a8884"/><path d="M0 .5 L10.6 .5 L5.3 5.5Z" fill="#151515"/></svg>
<div id="st_a" class="t" style="left:686px;top:563px;letter-spacing:0px;">*</div>
<div id="st_u" class="t" style="left:697.2px;top:563px;letter-spacing:0.42px;color:#0c860c">roman</div>
<div class="a" style="left:758px;top:568px;width:1px;height:1px;background:#fbfaf8"></div><div class="a" style="left:759px;top:569px;width:1px;height:1px;background:#a3a09c"></div><div class="a" style="left:758px;top:571px;width:1px;height:1px;background:#fbfaf8"></div><div class="a" style="left:759px;top:572px;width:1px;height:1px;background:#a3a09c"></div><div class="a" style="left:755px;top:571px;width:1px;height:1px;background:#fbfaf8"></div><div class="a" style="left:756px;top:572px;width:1px;height:1px;background:#a3a09c"></div><div class="a" style="left:758px;top:574px;width:1px;height:1px;background:#fbfaf8"></div><div class="a" style="left:759px;top:575px;width:1px;height:1px;background:#a3a09c"></div><div class="a" style="left:755px;top:574px;width:1px;height:1px;background:#fbfaf8"></div><div class="a" style="left:756px;top:575px;width:1px;height:1px;background:#a3a09c"></div><div class="a" style="left:752px;top:574px;width:1px;height:1px;background:#fbfaf8"></div><div class="a" style="left:753px;top:575px;width:1px;height:1px;background:#a3a09c"></div><div class="a" style="left:758px;top:577px;width:1px;height:1px;background:#fbfaf8"></div><div class="a" style="left:759px;top:578px;width:1px;height:1px;background:#a3a09c"></div><div class="a" style="left:755px;top:577px;width:1px;height:1px;background:#fbfaf8"></div><div class="a" style="left:756px;top:578px;width:1px;height:1px;background:#a3a09c"></div><div class="a" style="left:752px;top:577px;width:1px;height:1px;background:#fbfaf8"></div><div class="a" style="left:753px;top:578px;width:1px;height:1px;background:#a3a09c"></div><div class="a" style="left:749px;top:577px;width:1px;height:1px;background:#fbfaf8"></div><div class="a" style="left:750px;top:578px;width:1px;height:1px;background:#a3a09c"></div>
</body></html>
